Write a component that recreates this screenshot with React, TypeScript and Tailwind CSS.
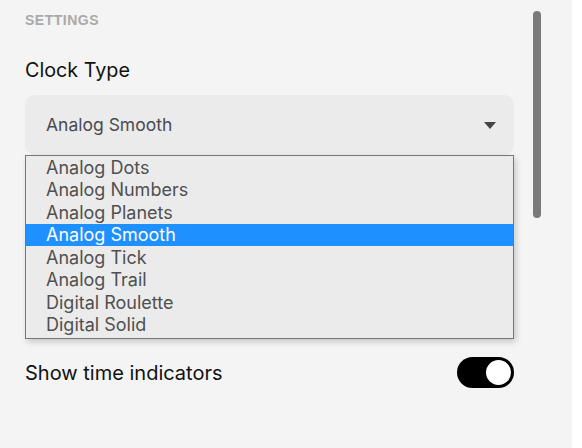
import React from 'react';

const clockTypes = [
  'Analog Dots',
  'Analog Numbers',
  'Analog Planets',
  'Analog Smooth',
  'Analog Tick',
  'Analog Trail',
  'Digital Roulette',
  'Digital Solid',
];

const App: React.FC = () => {
  const selected = 'Analog Smooth';

  return (
    <div className="flex h-[448px] w-[582px] bg-white font-['Inter',sans-serif]">
      <div className="relative h-full w-[572px] bg-[#f4f4f4]">
        <div className="pl-[25px] pr-[58px]">
          <div className="pt-[12px] font-['Liberation_Sans',Arial,sans-serif] text-[14px] font-bold leading-[16px] tracking-[0.5px] text-[#a9a9a9]">
            SETTINGS
          </div>

          <div className="mt-[30px] text-[19.75px] leading-[24px] text-[#111]">Clock Type</div>

          <div className="relative mt-[13px]">
            <div className="flex h-[60px] items-center justify-between rounded-[10px] bg-[#ebebeb] pl-[21px] pr-[18px]">
              <span className="text-[17.5px] text-[#4a4a52]">{selected}</span>
              <svg width="12" height="7" viewBox="0 0 12 7" className="mt-px">
                <path d="M0 0 L12 0 L6 7 Z" fill="#444" />
              </svg>
            </div>

            <ul className="absolute left-0 top-[60px] z-10 w-[489px] border border-[#777] bg-[#ebebeb] pb-[2px] shadow-[2px_3px_6px_rgba(0,0,0,0.18)]">
              {clockTypes.map(name => (
                <li
                  key={name}
                  className={
                    name === selected
                      ? 'flex h-[22.5px] items-center bg-[#1e90ff] pl-[20px] text-[18px] text-white'
                      : 'flex h-[22.5px] items-center pl-[20px] text-[18px] text-[#505050]'
                  }
                >
                  {name}
                </li>
              ))}
            </ul>
          </div>

          <div className="mt-[202px] flex items-center justify-between">
            <span className="text-[20px] leading-[24px] text-[#111]">Show time indicators</span>
            <div className="flex h-[31px] w-[57px] items-center justify-end rounded-full bg-black pr-[3px]">
              <div className="h-[25px] w-[25px] rounded-full bg-white" />
            </div>
          </div>
        </div>

        <div className="absolute left-[533px] top-[11px] h-[207px] w-[8px] rounded-full bg-[#7a7a7a]" />
      </div>
    </div>
  );
};

export default App;
